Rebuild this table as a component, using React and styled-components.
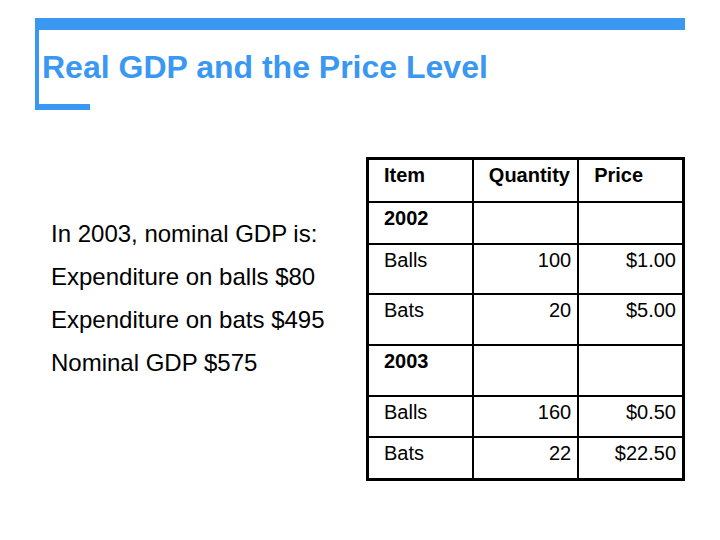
import React from 'react';
import styled, { createGlobalStyle } from 'styled-components';

const blue = '#3a98f2';

const GlobalStyle = createGlobalStyle`
  body {
    margin: 0;
    background: #ffffff;
    font-family: 'Liberation Sans', Arial, sans-serif;
  }
`;

const Slide = styled.div`
  width: 720px;
  height: 540px;
  box-sizing: border-box;
  padding: 18px 35px 0 35px;
  background: #fff;
`;

const HeaderFrame = styled.div`
  height: 92px;
  box-sizing: border-box;
  border-top: 12px solid ${blue};
  border-left: 4px solid ${blue};
  padding-left: 3px;
  display: flex;
  flex-direction: column;
`;

const Title = styled.h1`
  margin: 21px 0 0 0;
  font-size: 32px;
  line-height: 32px;
  font-weight: bold;
  color: ${blue};
`;

const Stub = styled.div`
  margin-top: auto;
  margin-left: -7px;
  width: 55px;
  height: 6px;
  background: ${blue};
`;

const Body = styled.div`
  display: flex;
  margin-top: 47px;
`;

const Notes = styled.div`
  width: 331px;
  box-sizing: border-box;
  padding: 55px 0 0 16px;
`;

const Note = styled.div`
  font-size: 24px;
  line-height: 43px;
  color: #000;
  white-space: nowrap;
`;

const Table = styled.table`
  border-collapse: collapse;
  border: 3px solid #000;
  width: 319px;
  table-layout: fixed;
  color: #000;
`;

const Row = styled.tr`
  height: ${p => p.$h}px;
`;

const Cell = styled.td`
  border: 2px solid #000;
  vertical-align: top;
  padding: 4px ${p => (p.$num ? '6px' : '0')} 0 ${p => (p.$num ? '0' : '15px')};
  font-size: 20px;
  line-height: 23px;
  font-weight: ${p => (p.$bold ? 'bold' : 'normal')};
  text-align: ${p => (p.$num ? 'right' : 'left')};
  white-space: nowrap;
`;

const rows = [
  { h: 43, head: true, cells: ['Item', 'Quantity', 'Price'] },
  { h: 42, head: true, cells: ['2002', '', ''] },
  { h: 50, cells: ['Balls', '100', '$1.00'] },
  { h: 51, cells: ['Bats', '20', '$5.00'] },
  { h: 51, head: true, cells: ['2003', '', ''] },
  { h: 41, cells: ['Balls', '160', '$0.50'] },
  { h: 43, cells: ['Bats', '22', '$22.50'] },
];

export default function App() {
  return (
    <>
      <GlobalStyle />
      <Slide>
        <HeaderFrame>
          <Title>Real GDP and the Price Level</Title>
          <Stub />
        </HeaderFrame>
        <Body>
          <Notes>
            <Note>In 2003, nominal GDP is:</Note>
            <Note>Expenditure on balls $80</Note>
            <Note>Expenditure on bats $495</Note>
            <Note>Nominal GDP $575</Note>
          </Notes>
          <Table>
            <tbody>
              {rows.map((r, i) => (
                <Row key={i} $h={r.h}>
                  {r.cells.map((c, j) => (
                    <Cell key={j} $bold={r.head} $num={!r.head && j > 0}>
                      {c}
                    </Cell>
                  ))}
                </Row>
              ))}
            </tbody>
          </Table>
        </Body>
      </Slide>
    </>
  );
}
